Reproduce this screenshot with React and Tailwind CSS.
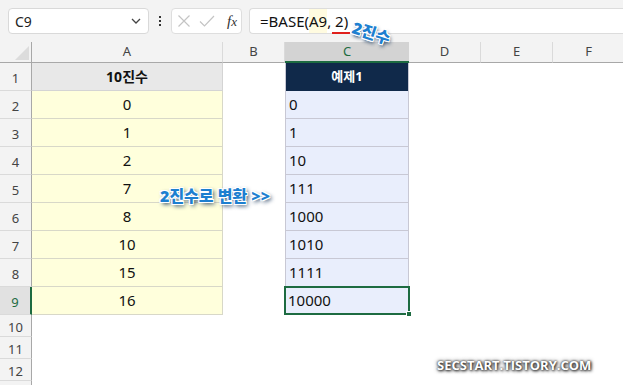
import React from 'react';

const cols = [
    { key: 'A', w: 'w-[191px]' },
    { key: 'B', w: 'w-[62px]' },
    { key: 'C', w: 'w-[124px]' },
    { key: 'D', w: 'w-[72px]' },
    { key: 'E', w: 'w-[72px]' },
    { key: 'F', w: 'w-[72px]' },
];

const decimals = ['0', '1', '2', '7', '8', '10', '15', '16'];
const binaries = ['0', '1', '10', '111', '1000', '1010', '1111', '10000'];

const font = "font-['Noto_Sans','Noto_Sans_CJK_KR',sans-serif]";

function Toolbar() {
    return (
        <div className="h-[42px] bg-[#f3f3f3] flex items-start pt-[8px] pl-[8px]">
            {/* Name box */}
            <div className="w-[141px] h-[26px] bg-white border border-[#d9d9d9] rounded-[4px] flex items-center justify-between pl-[6px] pr-[7px]">
                <span className="text-[14px] text-[#222]">C9</span>
                <svg width="10" height="6" viewBox="0 0 10 6" fill="none" stroke="#444" strokeWidth="1.3">
                    <path d="M1 1l4 4 4-4" />
                </svg>
            </div>
            <div className="w-[22px] h-[26px] flex flex-col items-center justify-center gap-[2px]">
                <span className="w-[2px] h-[2px] bg-[#333]" />
                <span className="w-[2px] h-[2px] bg-[#333]" />
                <span className="w-[2px] h-[2px] bg-[#333]" />
            </div>
            {/* Cancel / enter / fx */}
            <div className="w-[71px] h-[26px] bg-white border border-[#dedede] rounded-[4px] flex items-center pl-[5px]">
                <svg width="14" height="14" viewBox="0 0 14 14" fill="none" stroke="#c4c4c4" strokeWidth="1.2">
                    <path d="M1.5 1.5l11 11M12.5 1.5l-11 11" />
                </svg>
                <svg width="16" height="14" viewBox="0 0 16 14" fill="none" stroke="#c4c4c4" strokeWidth="1.2" className="ml-[8px]">
                    <path d="M1 7.5l4.5 4.5L15 2" />
                </svg>
                <span className="ml-[12px] text-[15px] italic font-['Liberation_Serif',serif] text-[#333] leading-none">
                    f<span className="text-[13px]">x</span>
                </span>
            </div>
            {/* Formula input */}
            <div className="ml-[7px] flex-1 h-[26px] bg-white border-y border-l border-[#dcdcdc] rounded-l-[4px] flex items-stretch pl-[10px]">
                <span className="text-[15px] text-[#111] leading-[24px]">=BASE(</span>
                <span className="text-[15px] text-[#111] leading-[24px] bg-[#fffbe0]">A9</span>
                <span className="text-[15px] text-[#111] leading-[24px]">, 2)</span>
            </div>
        </div>
    );
}

function HeaderRow() {
    return (
        <div className="flex h-[21px]">
            <div className="w-[32px] shrink-0 bg-[#f3f3f3] border-r border-b border-[#a8a8a8] relative">
                <div className="absolute right-[2px] bottom-[2px] w-0 h-0 border-l-[14px] border-l-transparent border-b-[14px] border-b-[#dcdcdc]" />
            </div>
            {cols.map(c =>
                c.key === 'C' ? (
                    <div key={c.key} className={`${c.w} shrink-0 bg-[#d3d3d3] border-b-2 border-[#1d6b41] flex items-center justify-center text-[13px] text-[#1d6b41]`}>
                        {c.key}
                    </div>
                ) : (
                    <div key={c.key} className={`${c.w} shrink-0 bg-[#f3f3f3] border-r border-r-[#dadada] border-b border-b-[#a8a8a8] flex items-center justify-center text-[13px] text-[#444]`}>
                        {c.key}
                    </div>
                )
            )}
        </div>
    );
}

function RowHeader({ n, h, selected }) {
    if (selected) {
        return (
            <div className={`w-[32px] ${h} shrink-0 bg-[#e1e1e1] border-r-2 border-r-[#1d6b41] border-b border-b-[#dadada] flex items-center justify-center text-[13px] text-[#1d6b41] pt-[4px]`}>
                {n}
            </div>
        );
    }
    return (
        <div className={`w-[32px] ${h} shrink-0 bg-[#f3f3f3] border-r border-r-[#a8a8a8] border-b border-b-[#dadada] flex items-center justify-center text-[13px] text-[#444] pt-[4px]`}>
            {n}
        </div>
    );
}

function DataRow({ n, a, c, header }) {
    const selected = n === 9;
    return (
        <div className="flex h-[28px]">
            <RowHeader n={n} h="h-[28px]" selected={selected} />
            {header ? (
                <div className="w-[191px] shrink-0 bg-[#e8e8e8] border-r border-b border-[#d4d4d4] flex items-center justify-center text-[14px] font-bold text-[#111]">
                    {a}
                </div>
            ) : (
                <div className="w-[191px] shrink-0 bg-[#ffffdc] border-r border-b border-[#d8d8c8] flex items-center justify-center text-[15px] text-[#111]">
                    {a}
                </div>
            )}
            <div className="w-[62px] shrink-0 bg-white" />
            {header ? (
                <div className="w-[124px] shrink-0 bg-[#10294a] border-x border-[#c8c8d4] flex items-center justify-center text-[13px] font-bold text-white">
                    {c}
                </div>
            ) : selected ? (
                <div className="w-[126px] -ml-[1px] -mr-[1px] -mt-[1px] h-[29px] shrink-0 bg-[#e9eefc] border-2 border-[#1d6b41] flex items-center pl-[2px] text-[15px] text-[#111] relative z-10">
                    {c}
                    <span className="absolute -right-[4px] -bottom-[4px] w-[6px] h-[6px] bg-[#1d6b41] border border-white" />
                </div>
            ) : (
                <div className="w-[124px] shrink-0 bg-[#e9eefc] border-x border-b border-[#c8c8d4] flex items-center pl-[3px] text-[15px] text-[#111]">
                    {c}
                </div>
            )}
            <div className="flex-1 bg-white" />
        </div>
    );
}

export default function App() {
    return (
        <div className={`w-[623px] h-[385px] overflow-hidden bg-white relative ${font}`}>
            <Toolbar />
            <HeaderRow />
            <DataRow n={1} a="10진수" c="예제1" header />
            {decimals.map((d, i) => (
                <DataRow key={i} n={i + 2} a={d} c={binaries[i]} />
            ))}
            {[10, 11, 12, ''].map((n, i) => (
                <div key={i} className="flex h-[22px]">
                    <RowHeader n={n} h="h-[22px]" />
                    <div className="flex-1 bg-white" />
                </div>
            ))}

            {/* annotations */}
            <div className="absolute left-[332px] top-[32px] w-[18px] h-[2px] bg-[#e0201c]" />
            <div className="absolute left-[352px] top-[23px] rotate-[18deg] text-[16px] font-black text-[#1d7fd0] leading-[20px] [text-shadow:1px_1px_0_#fff,-1px_-1px_0_#fff,1px_-1px_0_#fff,-1px_1px_0_#fff,0_1px_0_#fff,0_-1px_0_#fff,2px_2px_4px_#0a2a50]">
                2진수
            </div>
            <div className="absolute left-[160px] top-[186px] text-[16px] font-black text-[#1d7fd0] leading-[20px] whitespace-nowrap [text-shadow:1px_1px_0_#fff,-1px_-1px_0_#fff,1px_-1px_0_#fff,-1px_1px_0_#fff,0_1px_0_#fff,0_-1px_0_#fff,2px_2px_4px_#0a2a50]">
                2진수로 변환 &gt;&gt;
            </div>
            <div className="absolute left-[437px] top-[356px] text-[13px] font-bold text-white tracking-[0px] font-['Open_Sans',sans-serif] [text-shadow:0_0_2px_#333,1px_1px_3px_#222,0_0_4px_#555]">
                SECSTART.TISTORY.COM
            </div>
        </div>
    );
}
